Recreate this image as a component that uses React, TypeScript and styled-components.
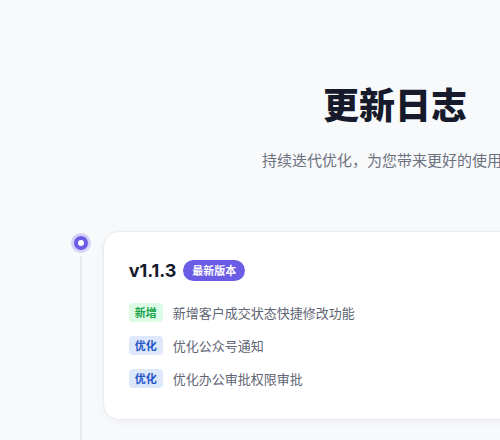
import React from "react";
import styled, { createGlobalStyle } from "styled-components";

const Global = createGlobalStyle`
  html, body { margin: 0; padding: 0; background: #f8f9fb; overflow: hidden; }
  body { font-family: Inter, "Noto Sans CJK SC", sans-serif; -webkit-font-smoothing: antialiased; }
`;

const Page = styled.div`
  width: 790px;
  min-height: 440px;
  background: #f8f9fb;
`;

const Header = styled.header`
  display: flex;
  flex-direction: column;
  align-items: center;
  padding-top: 84px;
`;

const Title = styled.h1`
  margin: 0;
  font-size: 36px;
  line-height: 44px;
  font-weight: 800;
  color: #161a2b;
  font-family: Inter, "Noto Sans CJK SC", sans-serif;
`;

const Subtitle = styled.p`
  margin: 22px 0 0;
  padding-left: 4px;
  font-size: 15px;
  line-height: 22px;
  color: #6b7280;
  white-space: nowrap;
`;

const Timeline = styled.section`
  margin-top: 59px;
  padding-left: 71px;
  display: flex;
  flex-direction: column;
`;

const Entry = styled.article`
  display: flex;
  gap: 12px;
`;

const Rail = styled.div`
  width: 20px;
  display: flex;
  flex-direction: column;
  align-items: center;
  padding-top: 5px;
`;

const Dot = styled.span`
  width: 6px;
  height: 6px;
  border-radius: 50%;
  background: #fff;
  border: 4px solid #6b5ce6;
  box-shadow: 0 0 0 3px rgba(120, 104, 240, 0.28);
  flex-shrink: 0;
`;

const Line = styled.span`
  flex: 1;
  width: 2px;
  margin-top: 6px;
  background: #e8eaef;
  min-height: 220px;
`;

const Card = styled.div`
  width: 640px;
  background: #fff;
  border: 1px solid #e9ebf0;
  border-radius: 16px;
  box-shadow: 0 2px 8px rgba(17, 24, 39, 0.04);
  padding: 25px 25px 31px;
  align-self: flex-start;
`;

const VersionRow = styled.div`
  display: flex;
  align-items: center;
  gap: 7px;
  height: 26px;
  margin-bottom: 19px;
`;

const Version = styled.h2`
  margin: 0;
  font-size: 18px;
  font-weight: 700;
  color: #161a2b;
  letter-spacing: -0.1px;
`;

const LatestBadge = styled.span`
  display: inline-flex;
  align-items: center;
  height: 21px;
  padding: 0 9px;
  border-radius: 11px;
  background: #6b5ce6;
  color: #fff;
  font-size: 11px;
  font-weight: 700;
`;

const List = styled.ul`
  list-style: none;
  margin: 0;
  padding: 0;
  display: flex;
  flex-direction: column;
  gap: 13px;
`;

const Item = styled.li`
  display: flex;
  align-items: center;
  gap: 10px;
  height: 20px;
`;

const Tag = styled.span<{ $kind: "new" | "opt" }>`
  display: inline-flex;
  align-items: center;
  justify-content: center;
  height: 19px;
  padding: 0 6px;
  border-radius: 4px;
  font-size: 11px;
  font-weight: 700;
  background: ${(p) => (p.$kind === "new" ? "#dcfce6" : "#dde8fb")};
  color: ${(p) => (p.$kind === "new" ? "#16a34a" : "#2456c9")};
`;

const ItemText = styled.span`
  font-size: 13px;
  color: #5f6574;
`;

const items: { kind: "new" | "opt"; label: string; text: string }[] = [
  { kind: "new", label: "新增", text: "新增客户成交状态快捷修改功能" },
  { kind: "opt", label: "优化", text: "优化公众号通知" },
  { kind: "opt", label: "优化", text: "优化办公审批权限审批" },
];

export default function App() {
  return (
    <Page>
      <Global />
      <Header>
        <Title>更新日志</Title>
        <Subtitle>持续迭代优化，为您带来更好的使用体验</Subtitle>
      </Header>
      <Timeline>
        <Entry>
          <Rail>
            <Dot />
            <Line />
          </Rail>
          <Card>
            <VersionRow>
              <Version>v1.1.3</Version>
              <LatestBadge>最新版本</LatestBadge>
            </VersionRow>
            <List>
              {items.map((it, i) => (
                <Item key={i}>
                  <Tag $kind={it.kind}>{it.label}</Tag>
                  <ItemText>{it.text}</ItemText>
                </Item>
              ))}
            </List>
          </Card>
        </Entry>
      </Timeline>
    </Page>
  );
}
